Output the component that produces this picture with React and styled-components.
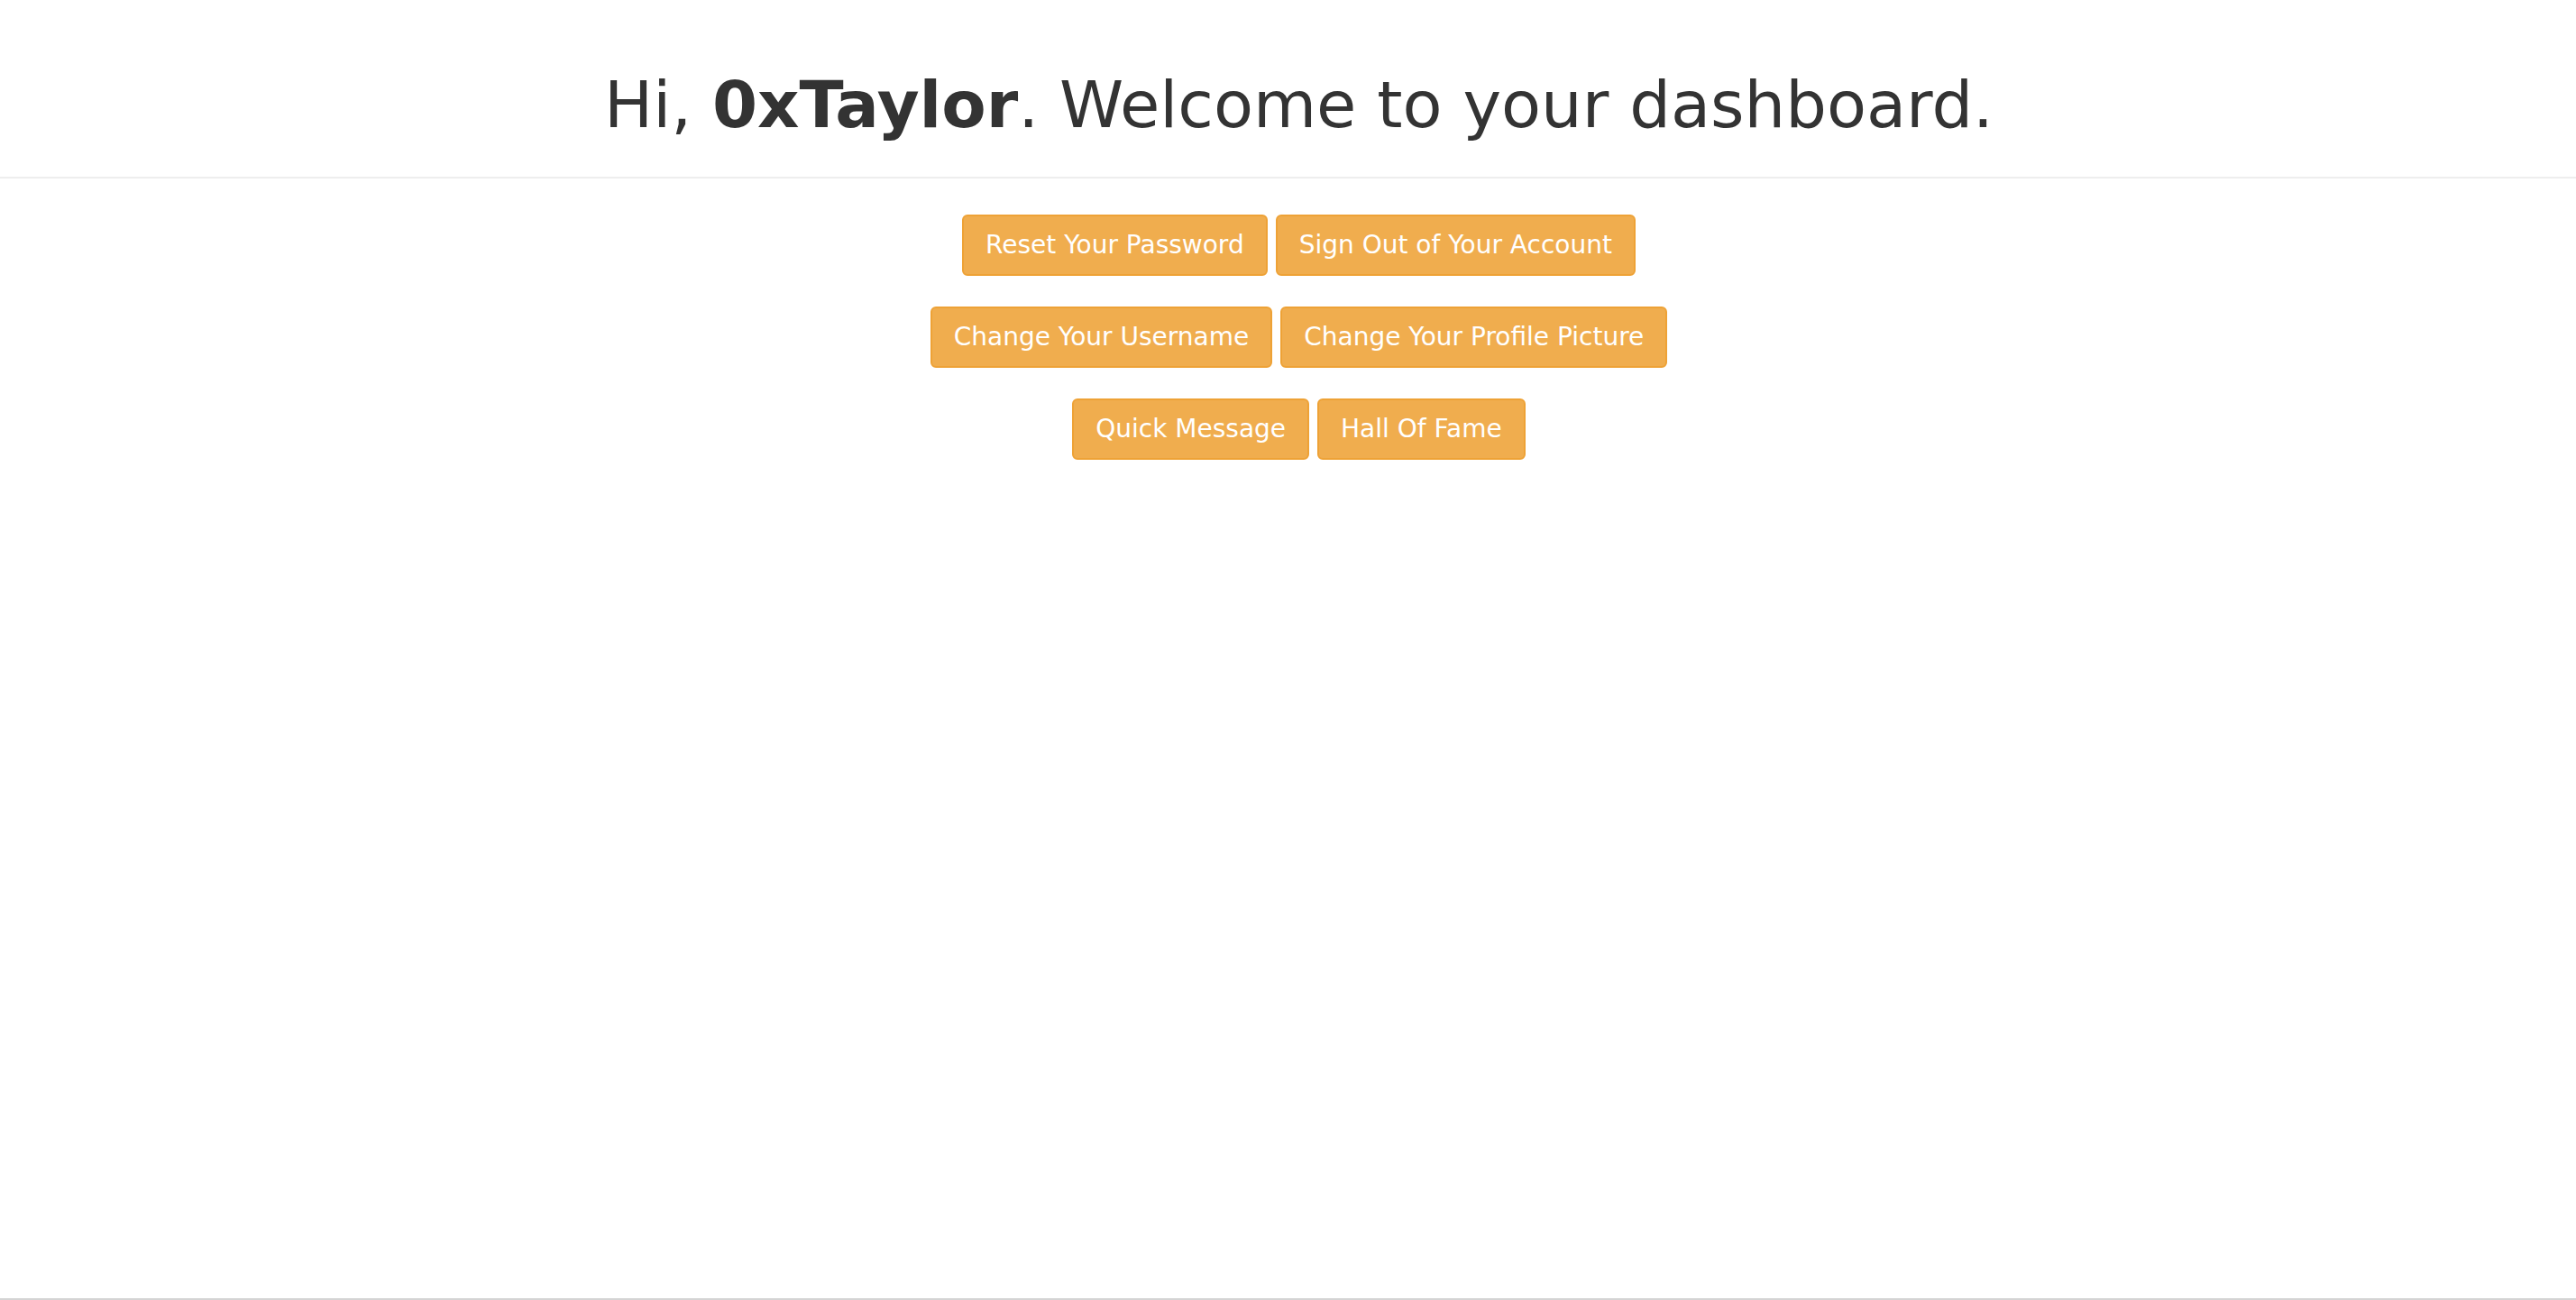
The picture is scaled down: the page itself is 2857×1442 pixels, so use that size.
import React from 'react';
import styled, { createGlobalStyle } from 'styled-components';

const GlobalStyle = createGlobalStyle`
  html, body {
    margin: 0;
    padding: 0;
    background: #fff;
  }

  body {
    font-family: "DejaVu Sans", "Noto Sans", sans-serif;
    color: #333;
  }

  * {
    box-sizing: border-box;
  }
`;

const Page = styled.div`
  min-height: 100vh;
  display: flex;
  flex-direction: column;
`;

const Header = styled.header`
  padding: 77px 0 40px 24px;
  border-bottom: 2px solid #eee;
  text-align: center;
`;

const Title = styled.h1`
  margin: 0;
  font-size: 72px;
  font-weight: 400;
  line-height: 1.1;
  color: #333;

  strong {
    font-weight: 700;
  }
`;

const Main = styled.main`
  flex: 1;
  display: flex;
  flex-direction: column;
  align-items: center;
  gap: 34px;
  padding: 40px 0 0 24px;
`;

const ButtonRow = styled.div`
  display: flex;
  justify-content: center;
  gap: 9px;
`;

const Button = styled.button`
  font-family: inherit;
  font-size: 28px;
  line-height: 40px;
  padding: 12px 24px;
  color: #fff;
  background: #f0ad4e;
  border: 2px solid #eea236;
  border-radius: 6px;
  cursor: pointer;
  white-space: nowrap;

  &:hover {
    background: #ec971f;
    border-color: #d58512;
  }
`;

const Footer = styled.footer`
  border-top: 2px solid #d4d4d4;
`;

const rows = [
  ['Reset Your Password', 'Sign Out of Your Account'],
  ['Change Your Username', 'Change Your Profile Picture'],
  ['Quick Message', 'Hall Of Fame'],
];

const App = () => {
  const username = '0xTaylor';

  return (
    <>
      <GlobalStyle />
      <Page>
        <Header>
          <Title>
            Hi, <strong>{username}</strong>. Welcome to your dashboard.
          </Title>
        </Header>

        <Main>
          {rows.map((row, i) => (
            <ButtonRow key={i}>
              {row.map((label) => (
                <Button key={label}>{label}</Button>
              ))}
            </ButtonRow>
          ))}
        </Main>

        <Footer />
      </Page>
    </>
  );
};

export default App;
